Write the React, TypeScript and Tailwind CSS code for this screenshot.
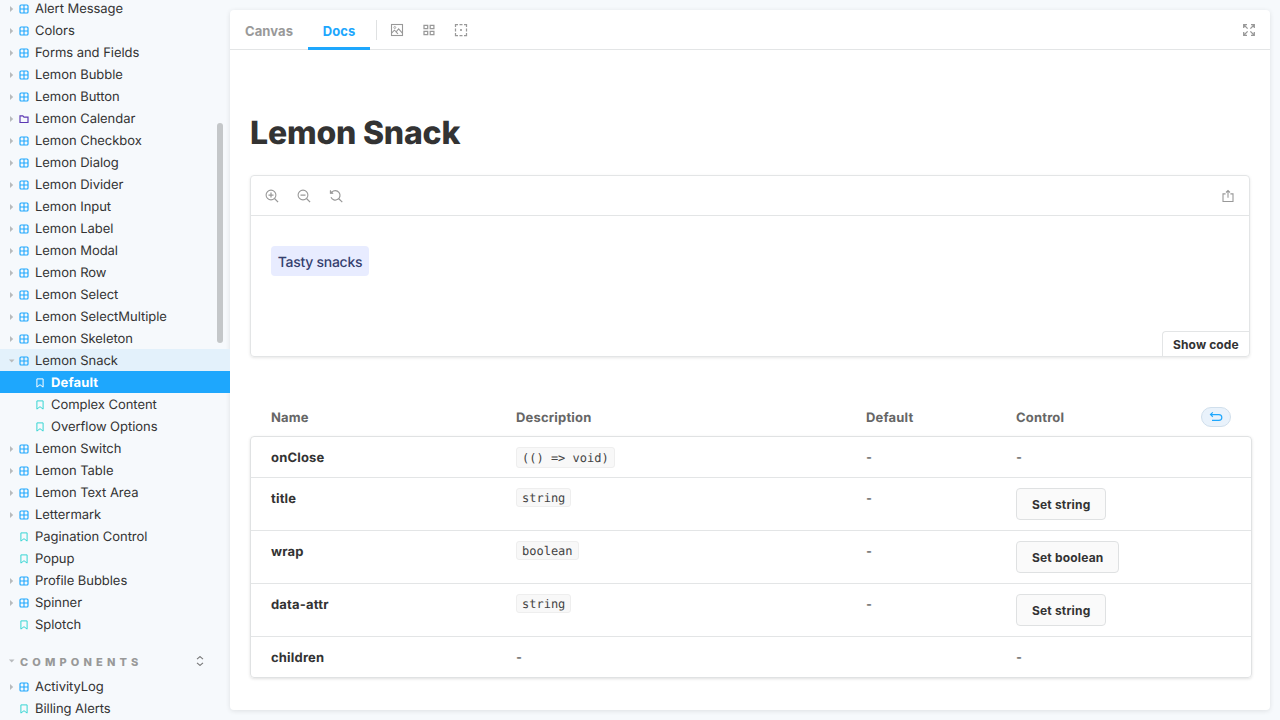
import React from 'react';

type Kind = 'component' | 'folder' | 'story';

interface Item {
  label: string;
  kind: Kind;
  depth?: number;
  expanded?: boolean;
  selected?: boolean;
}

const c = (label: string): Item => ({ label, kind: 'component' });
const s = (label: string, depth = 0): Item => ({ label, kind: 'story', depth });

const lemonItems: Item[] = [
  c('Alert Message'),
  c('Colors'),
  c('Forms and Fields'),
  c('Lemon Bubble'),
  c('Lemon Button'),
  { label: 'Lemon Calendar', kind: 'folder' },
  c('Lemon Checkbox'),
  c('Lemon Dialog'),
  c('Lemon Divider'),
  c('Lemon Input'),
  c('Lemon Label'),
  c('Lemon Modal'),
  c('Lemon Row'),
  c('Lemon Select'),
  c('Lemon SelectMultiple'),
  c('Lemon Skeleton'),
  { label: 'Lemon Snack', kind: 'component', expanded: true },
  { label: 'Default', kind: 'story', depth: 1, selected: true },
  s('Complex Content', 1),
  s('Overflow Options', 1),
  c('Lemon Switch'),
  c('Lemon Table'),
  c('Lemon Text Area'),
  c('Lettermark'),
  s('Pagination Control'),
  s('Popup'),
  c('Profile Bubbles'),
  c('Spinner'),
  s('Splotch'),
];

const componentItems: Item[] = [c('ActivityLog'), s('Billing Alerts')];

function KindIcon({ kind, selected }: { kind: Kind; selected?: boolean }) {
  if (kind === 'component') {
    return (
      <svg className="h-[10px] w-[10px] text-[#1ea7fd]" viewBox="0 0 10 10" fill="none" stroke="currentColor">
        <rect x="1" y="1" width="8" height="8" rx="1" strokeWidth="1.15" />
        <path d="M5 1v8M1 5h8" strokeWidth="1.1" />
      </svg>
    );
  }
  if (kind === 'folder') {
    return (
      <svg className="h-[10px] w-[10px] text-[#5c38b3]" viewBox="0 0 10 10" fill="none" stroke="currentColor">
        <path d="M1 1.9h2.8l1.2 1.3h4v5.3H1z" strokeWidth="1.2" />
      </svg>
    );
  }
  return (
    <svg
      className={selected ? 'h-[10px] w-[10px] text-white' : 'h-[10px] w-[10px] text-[#37d5d3]'}
      viewBox="0 0 10 10"
      fill="none"
      stroke="currentColor"
    >
      <path d="M1.9 0.9h6.2v8.2L5 6.7 1.9 9.1z" strokeWidth="1" />
    </svg>
  );
}

function Arrow({ expanded }: { expanded?: boolean }) {
  return (
    <svg className="h-2 w-2 text-[#b8bbbd]" viewBox="0 0 8 8" fill="currentColor">
      {expanded ? <path d="M1.9 2.6h5.6L4.7 5.4z" /> : <path d="M3 1v6L6.2 4z" />}
    </svg>
  );
}

function Row({ item }: { item: Item }) {
  let look = 'tracking-[-0.04px] text-[#333333]';
  if (item.selected) look = 'bg-[#1ea7fd] font-bold tracking-[0.15px] text-white';
  else if (item.expanded) look = 'bg-[#e3f1fb] tracking-[-0.04px] text-[#333333]';
  return (
    <div className={`flex h-[22px] shrink-0 items-center text-[13px] leading-4 ${item.depth ? 'pl-[23px]' : 'pl-[7px]'} ${look}`}>
      <span className="flex w-3 shrink-0 pt-[2px]">{item.kind !== 'story' && <Arrow expanded={item.expanded} />}</span>
      <span className="mr-[6px] shrink-0 pt-px">
        <KindIcon kind={item.kind} selected={item.selected} />
      </span>
      <span className="whitespace-nowrap pt-px">{item.label}</span>
    </div>
  );
}

function Icon({ children }: { children: React.ReactNode }) {
  return (
    <svg className="h-[14px] w-[14px] shrink-0" viewBox="0 0 14 14" fill="none" stroke="currentColor" strokeWidth="1.1">
      {children}
    </svg>
  );
}

function Sidebar() {
  return (
    <nav className="relative flex h-full w-[230px] shrink-0 flex-col overflow-hidden">
      <div className="-mt-[3px] flex flex-col">
        {lemonItems.map((i) => (
          <Row key={i.label} item={i} />
        ))}
      </div>
      <div className="mt-4 flex h-6 shrink-0 items-center pb-px pl-[7px] text-[#999999]">
        <span className="mb-[3px] flex w-[13px]">
          <Arrow expanded />
        </span>
        <span className="-mt-[2px] text-[11px] font-extrabold leading-4 tracking-[4.15px]">COMPONENTS</span>
        <svg className="-mt-[3px] mr-[25px] ml-auto h-[10px] w-[10px] text-[#777777]" viewBox="0 0 10 10" fill="none" stroke="currentColor">
          <path d="M2 3.2L5 0.6l3 2.6M2 6.8l3 2.6 3-2.6" strokeWidth="1.1" />
        </svg>
      </div>
      <div className="flex flex-col">
        {componentItems.map((i) => (
          <Row key={i.label} item={i} />
        ))}
      </div>
      <div className="absolute left-[217px] top-[123px] h-[220px] w-[6px] rounded-full bg-[#c4c7c9]" />
    </nav>
  );
}

function Toolbar() {
  return (
    <div className="flex h-10 shrink-0 border-b border-[#e3e5e6] text-[13px] font-bold tracking-[0.1px] text-[#999999]">
      <button className="ml-[15px] h-10 w-12 whitespace-nowrap pt-[2px] text-left leading-none">Canvas</button>
      <button className="ml-[15px] h-10 w-[62px] border-b-[3px] border-[#1ea7fd] pt-[5px] leading-none text-[#1ea7fd]">Docs</button>
      <div className="ml-[6px] mt-[10px] h-5 w-px bg-[#dfe1e2]" />
      <div className="ml-[13px] flex h-10 items-center gap-[18px]">
        <Icon>
          <rect x="1.5" y="1.5" width="11" height="11" />
          <circle cx="4.8" cy="4.5" r="1" strokeWidth="0.8" />
          <path d="M1.8 9.8l2.6-2.6 1.8 1.6 2.4-3 3.8 4.4M5.8 8.6l2.2 2.2" strokeWidth="1.1" />
        </Icon>
        <Icon>
          <path d="M2 2.3h3.7v3.4H2zM8.2 2.3h3.7v3.4H8.2zM2 8.3h3.7v3.4H2zM8.2 8.3h3.7v3.4H8.2z" strokeWidth="1.25" />
        </Icon>
        <Icon>
          <path d="M1.5 4V1.5H4M10 1.5h2.5V4M12.5 10v2.5H10M4 12.5H1.5V10M5.5 1.5h3M5.5 12.5h3M1.5 5.5v3M12.5 5.5v3" strokeWidth="1.25" />
          <rect x="6.1" y="6.1" width="1.8" height="1.8" fill="currentColor" stroke="none" />
        </Icon>
      </div>
      <div className="ml-auto mr-[14px] flex h-10 items-center">
        <Icon>
          <path
            d="M1.7 5V1.7H5M9 1.7h3.3V5M12.3 9v3.3H9M5 12.3H1.7V9M1.8 1.8l3.8 3.8M12.2 1.8L8.4 5.6M12.2 12.2L8.4 8.4M1.8 12.2l3.8-3.8"
            strokeWidth="1.3"
          />
        </Icon>
      </div>
    </div>
  );
}

function Preview() {
  return (
    <section className="mt-[23px] flex h-[182px] w-[1000px] flex-col overflow-hidden rounded-[4px] border border-[#e3e5e6] shadow-[0_1px_3px_0_rgba(0,0,0,0.1)]">
      <div className="flex h-10 shrink-0 items-center gap-[18px] border-b border-[#e3e5e6] pl-[14px] pr-[14px] text-[#999999]">
        <Icon>
          <circle cx="6" cy="6" r="4.9" />
          <path d="M9.5 9.5l3.6 3.6M3.5 6h5M6 3.5v5" strokeWidth="1.25" />
        </Icon>
        <Icon>
          <circle cx="6" cy="6" r="4.9" />
          <path d="M9.5 9.5l3.6 3.6M3.5 6h5" strokeWidth="1.25" />
        </Icon>
        <Icon>
          <path d="M2.8 3.2a4.7 4.7 0 1 1-.8 5M9.8 9.7l3.5 3.4" strokeWidth="1.2" />
          <path d="M1 1v3.5h3.6z" fill="currentColor" stroke="none" />
          <path d="M1.4 1.6v2.6h2.7" />
        </Icon>
        <span className="ml-auto">
          <Icon>
            <path d="M4.6 4.9H2v7.6h10V4.9H9.4M7 8.8V1.8M5 3.5l2-2 2 2" />
          </Icon>
        </span>
      </div>
      <div className="flex flex-1 flex-col justify-between pt-[30px]">
        <span className="ml-5 flex h-[30px] w-[98px] items-center justify-center whitespace-nowrap rounded-[4px] bg-[#e8ecff] pt-[2px] text-[14px] font-medium tracking-[-0.28px] text-[#35406f]">
          Tasty snacks
        </span>
        <button className="flex h-[25px] w-[87px] items-center self-end whitespace-nowrap rounded-tl-[4px] border-l border-t border-[#e3e5e6] pl-[10px] pt-[2px] text-[12px] font-bold tracking-[0.12px] text-[#333333]">
          Show code
        </button>
      </div>
    </section>
  );
}

interface Arg {
  name: string;
  type?: string;
  def: string;
  control?: string;
}

const args: Arg[] = [
  { name: 'onClose', type: '(() => void)', def: '-' },
  { name: 'title', type: 'string', def: '-', control: 'Set string' },
  { name: 'wrap', type: 'boolean', def: '-', control: 'Set boolean' },
  { name: 'data-attr', type: 'string', def: '-', control: 'Set string' },
  { name: 'children', def: '' },
];

function ArgsTable() {
  return (
    <section className="mt-10 w-[1002px] text-[13px] leading-5 text-[#333333]">
      <div className="grid h-[39px] grid-cols-[245px_350px_150px_1fr] pl-[21px] pr-[21px] pt-[11px] font-bold tracking-[0.18px] text-[#666666]">
        <span>Name</span>
        <span>Description</span>
        <span>Default</span>
        <span className="flex justify-between">
          Control
          <button className="-mt-px flex h-5 w-[30px] items-center justify-center rounded-full border border-[#d0dfec] bg-[#e9f2fb] text-[#1ea7fd]">
            <svg className="h-3 w-[14px]" viewBox="0 0 14 12" fill="none" stroke="currentColor" strokeWidth="1.2">
              <path d="M3.8 1.4L1.5 3.6l2.3 2.2M1.5 3.6h8.4a2.9 2.9 0 0 1 0 5.8H3" />
            </svg>
          </button>
        </span>
      </div>
      <div className="rounded-[4px] border border-[#e0e2e3] shadow-[0_1px_3px_0_rgba(0,0,0,0.12)]">
        {args.map((a) => (
          <div
            key={a.name}
            className="grid grid-cols-[245px_350px_150px_1fr] border-b border-[#e3e5e6] py-[10px] pl-5 last:border-b-0"
          >
            <span className="-mb-px pt-px font-bold tracking-[0.18px]">{a.name}</span>
            {a.type ? (
              <code
                className={`justify-self-start whitespace-pre rounded-[3px] border border-[#eeeeee] bg-[#f8f8f8] px-[5px] font-['DejaVu_Sans_Mono',monospace] text-[12px] text-[#444444] ${
                  a.name === 'onClose' ? '-mb-px h-[21px] leading-[21px]' : 'h-[19px] leading-[19px]'
                }`}
              >
                {a.type}
              </code>
            ) : (
              <span className="-mb-px pt-px">-</span>
            )}
            <span className="-mb-px pt-px">{a.def}</span>
            {a.control ? (
              <button className="h-8 justify-self-start rounded-[4px] border border-[#dfe1e2] bg-[#fafafa] px-[15px] pt-[2px] text-[12px] font-bold tracking-[0.18px]">
                {a.control}
              </button>
            ) : (
              <span className="-mb-px pt-px">-</span>
            )}
          </div>
        ))}
      </div>
    </section>
  );
}

export default function App() {
  return (
    <div className="flex h-[720px] w-[1280px] overflow-hidden bg-[#f6f9fc] font-['Inter',sans-serif] antialiased [text-rendering:geometricPrecision]">
      <Sidebar />
      <main className="my-[10px] flex h-[700px] w-[1040px] flex-col overflow-hidden rounded-[4px] bg-white shadow-[0_1px_5px_0_rgba(0,0,0,0.1)]">
        <Toolbar />
        <div className="flex flex-col px-5 pt-[63px]">
          <h1 className="h-[39px] whitespace-nowrap text-[32px] font-extrabold leading-[39px] tracking-[-0.2px] text-[#333333]">Lemon Snack</h1>
          <Preview />
          <ArgsTable />
        </div>
      </main>
    </div>
  );
}
